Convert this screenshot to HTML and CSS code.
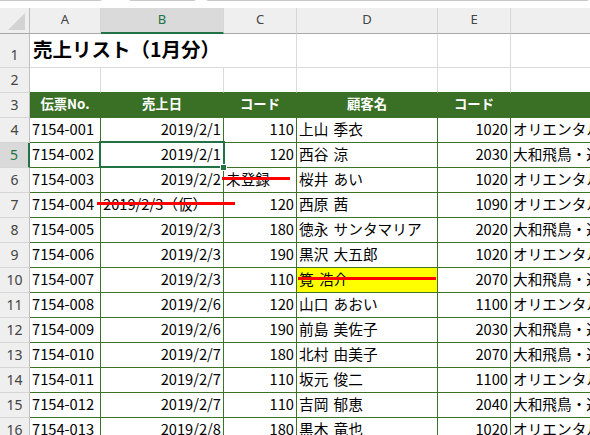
FILE: index.html
```html
<!DOCTYPE html>
<html lang="ja">
<head>
<meta charset="utf-8">
<title>売上リスト</title>
<link rel="stylesheet" href="styles.css">
</head>
<body>
<div class="sheet">
  <div class="topbar">
    <span class="box b1"></span><span class="box b2"></span><span class="box b3"></span>
  </div>

  <div class="row colhdr">
    <div class="corner"><svg width="29" height="25" viewBox="0 0 29 25"><polygon points="8,22 25,5 25,22" fill="#d3d3d3"/></svg></div>
    <div class="ch">A</div>
    <div class="ch sel">B</div>
    <div class="ch">C</div>
    <div class="ch">D</div>
    <div class="ch">E</div>
    <div class="ch"></div>
  </div>

  <div class="row r1">
    <div class="rh">1</div>
    <div class="c t1 title">売上リスト（1月分）</div>
    <div class="c t1"></div>
    <div class="c"></div>
    <div class="c"></div>
    <div class="c"></div>
    <div class="c"></div>
  </div>

  <div class="row r2">
    <div class="rh">2</div>
    <div class="c"></div><div class="c"></div><div class="c"></div><div class="c"></div><div class="c"></div><div class="c"></div>
  </div>

  <div class="row">
    <div class="rh">3</div>
    <div class="t h">伝票No.</div>
    <div class="t h">売上日</div>
    <div class="t h">コード</div>
    <div class="t h">顧客名</div>
    <div class="t h">コード</div>
    <div class="t h"></div>
  </div>

  <div class="row"><div class="rh">4</div><div class="t">7154-001</div><div class="t r">2019/2/1</div><div class="t r">110</div><div class="t nm">上山 季衣</div><div class="t r">1020</div><div class="t">オリエンタル交通</div></div>
  <div class="row"><div class="rh sel">5</div><div class="t">7154-002</div><div class="t r">2019/2/1</div><div class="t r">120</div><div class="t nm">西谷 涼</div><div class="t r">2030</div><div class="t">大和飛鳥・運輸</div></div>
  <div class="row"><div class="rh">6</div><div class="t">7154-003</div><div class="t r">2019/2/2</div><div class="t">未登録</div><div class="t nm">桜井 あい</div><div class="t r">1020</div><div class="t">オリエンタル交通</div></div>
  <div class="row"><div class="rh">7</div><div class="t">7154-004</div><div class="t">2019/2/3（仮）</div><div class="t r">120</div><div class="t nm">西原 茜</div><div class="t r">1090</div><div class="t">オリエンタル交通</div></div>
  <div class="row"><div class="rh">8</div><div class="t">7154-005</div><div class="t r">2019/2/3</div><div class="t r">180</div><div class="t nm">徳永 サンタマリア</div><div class="t r">2020</div><div class="t">大和飛鳥・運輸</div></div>
  <div class="row"><div class="rh">9</div><div class="t">7154-006</div><div class="t r">2019/2/3</div><div class="t r">190</div><div class="t nm">黒沢 大五郎</div><div class="t r">1020</div><div class="t">オリエンタル交通</div></div>
  <div class="row"><div class="rh">10</div><div class="t">7154-007</div><div class="t r">2019/2/3</div><div class="t r">110</div><div class="t nm hl">筧 浩介</div><div class="t r">2070</div><div class="t">大和飛鳥・運輸</div></div>
  <div class="row"><div class="rh">11</div><div class="t">7154-008</div><div class="t r">2019/2/6</div><div class="t r">120</div><div class="t nm">山口 あおい</div><div class="t r">1100</div><div class="t">オリエンタル交通</div></div>
  <div class="row"><div class="rh">12</div><div class="t">7154-009</div><div class="t r">2019/2/6</div><div class="t r">190</div><div class="t nm">前島 美佐子</div><div class="t r">2030</div><div class="t">大和飛鳥・運輸</div></div>
  <div class="row"><div class="rh">13</div><div class="t">7154-010</div><div class="t r">2019/2/7</div><div class="t r">180</div><div class="t nm">北村 由美子</div><div class="t r">2070</div><div class="t">大和飛鳥・運輸</div></div>
  <div class="row"><div class="rh">14</div><div class="t">7154-011</div><div class="t r">2019/2/7</div><div class="t r">110</div><div class="t nm">坂元 俊二</div><div class="t r">1100</div><div class="t">オリエンタル交通</div></div>
  <div class="row"><div class="rh">15</div><div class="t">7154-012</div><div class="t r">2019/2/7</div><div class="t r">110</div><div class="t nm">吉岡 郁恵</div><div class="t r">2040</div><div class="t">大和飛鳥・運輸</div></div>
  <div class="row"><div class="rh">16</div><div class="t">7154-013</div><div class="t r">2019/2/8</div><div class="t r">180</div><div class="t nm">黒木 竜也</div><div class="t r">1020</div><div class="t">オリエンタル交通</div></div>

  <div class="selbox"></div>
  <div class="handle"></div>
  <div class="strike s1"></div>
  <div class="strike s2"></div>
  <div class="strike s3"></div>
</div>
</body>
</html>
```

FILE: styles.css
```css
* { box-sizing: border-box; }
html, body { margin: 0; padding: 0; background: #fff; }
body {
  width: 590px;
  height: 435px;
  overflow: hidden;
  font-family: "Noto Sans CJK JP", "Noto Sans", sans-serif;
  color: #000;
}
.sheet {
  position: relative;
  width: 590px;
  height: 435px;
  overflow: hidden;
}

/* top strip with bottoms of name box / formula bar */
.topbar {
  height: 8px;
  display: flex;
  overflow: hidden;
}
.box {
  display: block;
  height: 4px;
  margin-top: -3px;
  border: 1px solid #c8c8c8;
  border-top: none;
  border-radius: 0 0 5px 5px;
}
.b1 { width: 109px; margin-left: -2px; }
.b2 { width: 71px; margin-left: 25px; }
.b3 { width: 400px; margin-left: 8px; }

.row {
  display: grid;
  grid-template-columns: 30px 71px 123px 73px 141px 73px 200px;
  height: 25px;
}
.row.colhdr { height: 26px; }
.row.r1 { height: 34px; }

/* column header */
.corner {
  background: #efefef;
  border-right: 1px solid #bfbfbf;
  border-bottom: 1px solid #a8a8a8;
}
.corner svg { display: block; }
.ch {
  background: #efefef;
  border-right: 1px solid #d6d6d6;
  border-bottom: 1px solid #a8a8a8;
  font-family: "Noto Sans", sans-serif;
  font-size: 13px;
  line-height: 22px;
  color: #444;
  text-align: center;
}
.ch.sel {
  background: #dadada;
  color: #217346;
  border-bottom: 2px solid #217346;
}

/* row header */
.rh {
  background: #efefef;
  border-right: 1px solid #bfbfbf;
  border-bottom: 1px solid #d6d6d6;
  font-family: "Noto Sans", sans-serif;
  font-size: 14px;
  line-height: 20px;
  color: #444;
  display: flex;
  align-items: flex-end;
  justify-content: center;
  padding-bottom: 2px;
}
.rh.sel {
  background: #d9d9d9;
  color: #217346;
  border-right: 2px solid #217346;
}

/* plain grid cells */
.c {
  border-right: 1px solid #dadada;
  border-bottom: 1px solid #dadada;
}
.r2 .c { border-bottom-color: #3a7026; }
.c.t1 { border-right: none; }
.title {
  font-size: 19.5px;
  font-weight: bold;
  line-height: 30px;
  padding-left: 3px;
  white-space: nowrap;
  overflow: visible;
}

/* table cells */
.t {
  border-right: 1px solid #3d7328;
  border-bottom: 1px solid #3d7328;
  padding: 0 2px;
  font-size: 14.67px;
  line-height: 22px;
  white-space: nowrap;
  overflow: hidden;
}
.t.r { text-align: right; }
.t.nm { word-spacing: 2px; }
.t.hl { background: #ffff00; }
.t.h {
  background: #3a7026;
  border-right-color: #3a7026;
  color: #fff;
  font-weight: bold;
  font-size: 13.33px;
  text-align: center;
}

/* overlays */
.selbox {
  position: absolute;
  left: 99px;
  top: 141px;
  width: 126px;
  height: 27px;
  border: 2px solid #217346;
}
.handle {
  position: absolute;
  left: 220px;
  top: 164px;
  width: 7px;
  height: 7px;
  background: #217346;
  border: 1px solid #fff;
}
.strike {
  position: absolute;
  height: 3px;
  background: #ff0000;
}
.s1 { left: 222px; top: 177px; width: 68px; }
.s2 { left: 97px; top: 202px; width: 138px; }
.s3 { left: 298px; top: 277px; width: 138px; }
```
